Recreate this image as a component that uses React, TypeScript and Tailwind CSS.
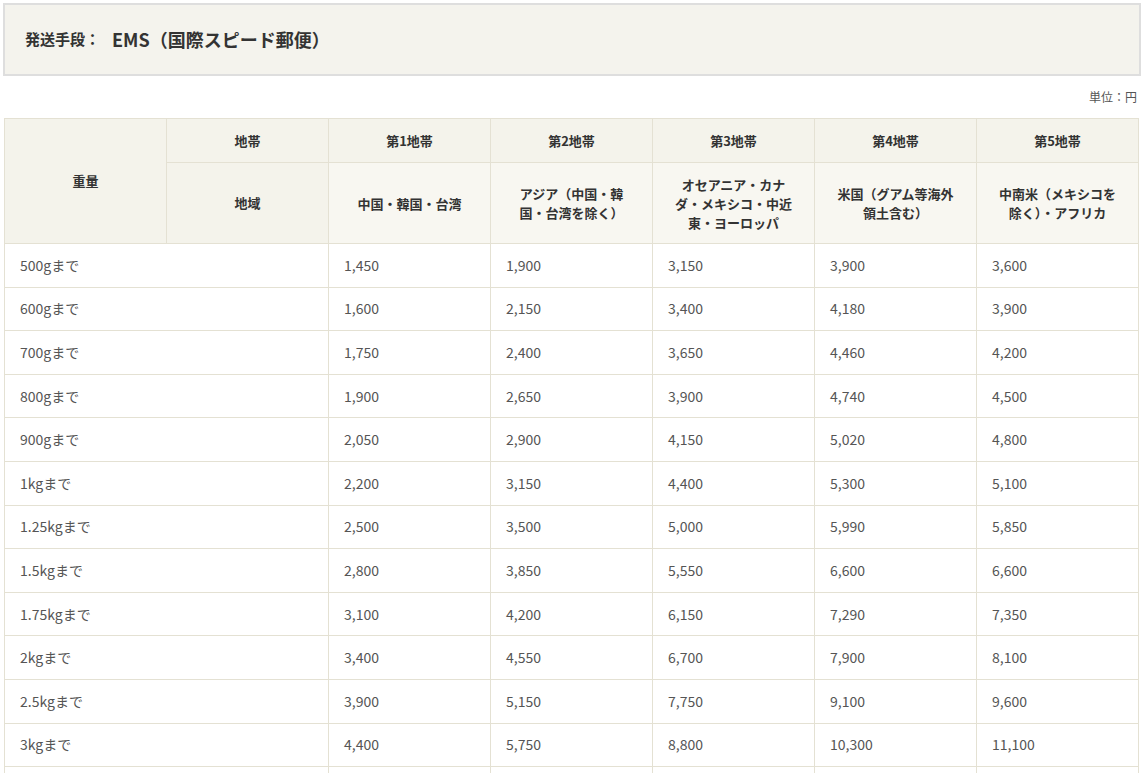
const zones = [
  { name: "第1地帯", area: "中国・韓国・台湾" },
  { name: "第2地帯", area: "アジア（中国・韓国・台湾を除く）" },
  { name: "第3地帯", area: "オセアニア・カナダ・メキシコ・中近東・ヨーロッパ" },
  { name: "第4地帯", area: "米国（グアム等海外領土含む）" },
  { name: "第5地帯", area: "中南米（メキシコを除く）・アフリカ" },
];

const rows: [string, string[]][] = [
  ["500gまで", ["1,450", "1,900", "3,150", "3,900", "3,600"]],
  ["600gまで", ["1,600", "2,150", "3,400", "4,180", "3,900"]],
  ["700gまで", ["1,750", "2,400", "3,650", "4,460", "4,200"]],
  ["800gまで", ["1,900", "2,650", "3,900", "4,740", "4,500"]],
  ["900gまで", ["2,050", "2,900", "4,150", "5,020", "4,800"]],
  ["1kgまで", ["2,200", "3,150", "4,400", "5,300", "5,100"]],
  ["1.25kgまで", ["2,500", "3,500", "5,000", "5,990", "5,850"]],
  ["1.5kgまで", ["2,800", "3,850", "5,550", "6,600", "6,600"]],
  ["1.75kgまで", ["3,100", "4,200", "6,150", "7,290", "7,350"]],
  ["2kgまで", ["3,400", "4,550", "6,700", "7,900", "8,100"]],
  ["2.5kgまで", ["3,900", "5,150", "7,750", "9,100", "9,600"]],
  ["3kgまで", ["4,400", "5,750", "8,800", "10,300", "11,100"]],
  ["3.5kgまで", ["4,900", "6,350", "9,850", "11,500", "12,600"]],
];

const cell = "border border-[#e4e1d3]";

export default function App() {
  return (
    <div
      className="bg-white text-[#333] px-[3px] pt-[3px]"
      style={{ fontFamily: '"Noto Sans CJK JP", "Noto Sans", sans-serif' }}
    >
      <div className="h-[73px] border-2 border-[#dedede] bg-[#f4f3ed] flex items-center pl-[20px]">
        <span className="text-[15px] font-bold">発送手段：</span>
        <span className="text-[18px] font-bold ml-[12px]">EMS（国際スピード郵便）</span>
      </div>
      <div className="text-right text-[12px] text-[#555] h-[42px] pt-[12px] pr-[4px]">単位：円</div>
      <table className="w-[1135px] ml-[1px] border-collapse table-fixed text-[14px]">
        <colgroup>
          {Array.from({ length: 7 }).map((_, i) => (
            <col key={i} className="w-[162px]" />
          ))}
        </colgroup>
        <thead>
          <tr className="h-[44px] bg-[#f4f3eb] text-[13px] font-bold">
            <th rowSpan={2} className={`${cell} font-bold`}>重量</th>
            <th className={`${cell} font-bold`}>地帯</th>
            {zones.map((z) => (
              <th key={z.name} className={`${cell} font-bold`}>{z.name}</th>
            ))}
          </tr>
          <tr className="h-[81px] bg-[#f8f7f1] text-[13px]">
            <th className={`${cell} font-bold bg-[#f4f3eb]`}>地域</th>
            {zones.map((z) => (
              <th key={z.name} className={`${cell} font-bold px-[20px] leading-[19px]`}>{z.area}</th>
            ))}
          </tr>
        </thead>
        <tbody className="text-[#555]">
          {rows.map(([w, vals]) => (
            <tr key={w} className="h-[43.6px]">
              <td colSpan={2} className={`${cell} pl-[15px]`}>{w}</td>
              {vals.map((v, i) => (
                <td key={i} className={`${cell} pl-[15px]`}>{v}</td>
              ))}
            </tr>
          ))}
        </tbody>
      </table>
    </div>
  );
}
